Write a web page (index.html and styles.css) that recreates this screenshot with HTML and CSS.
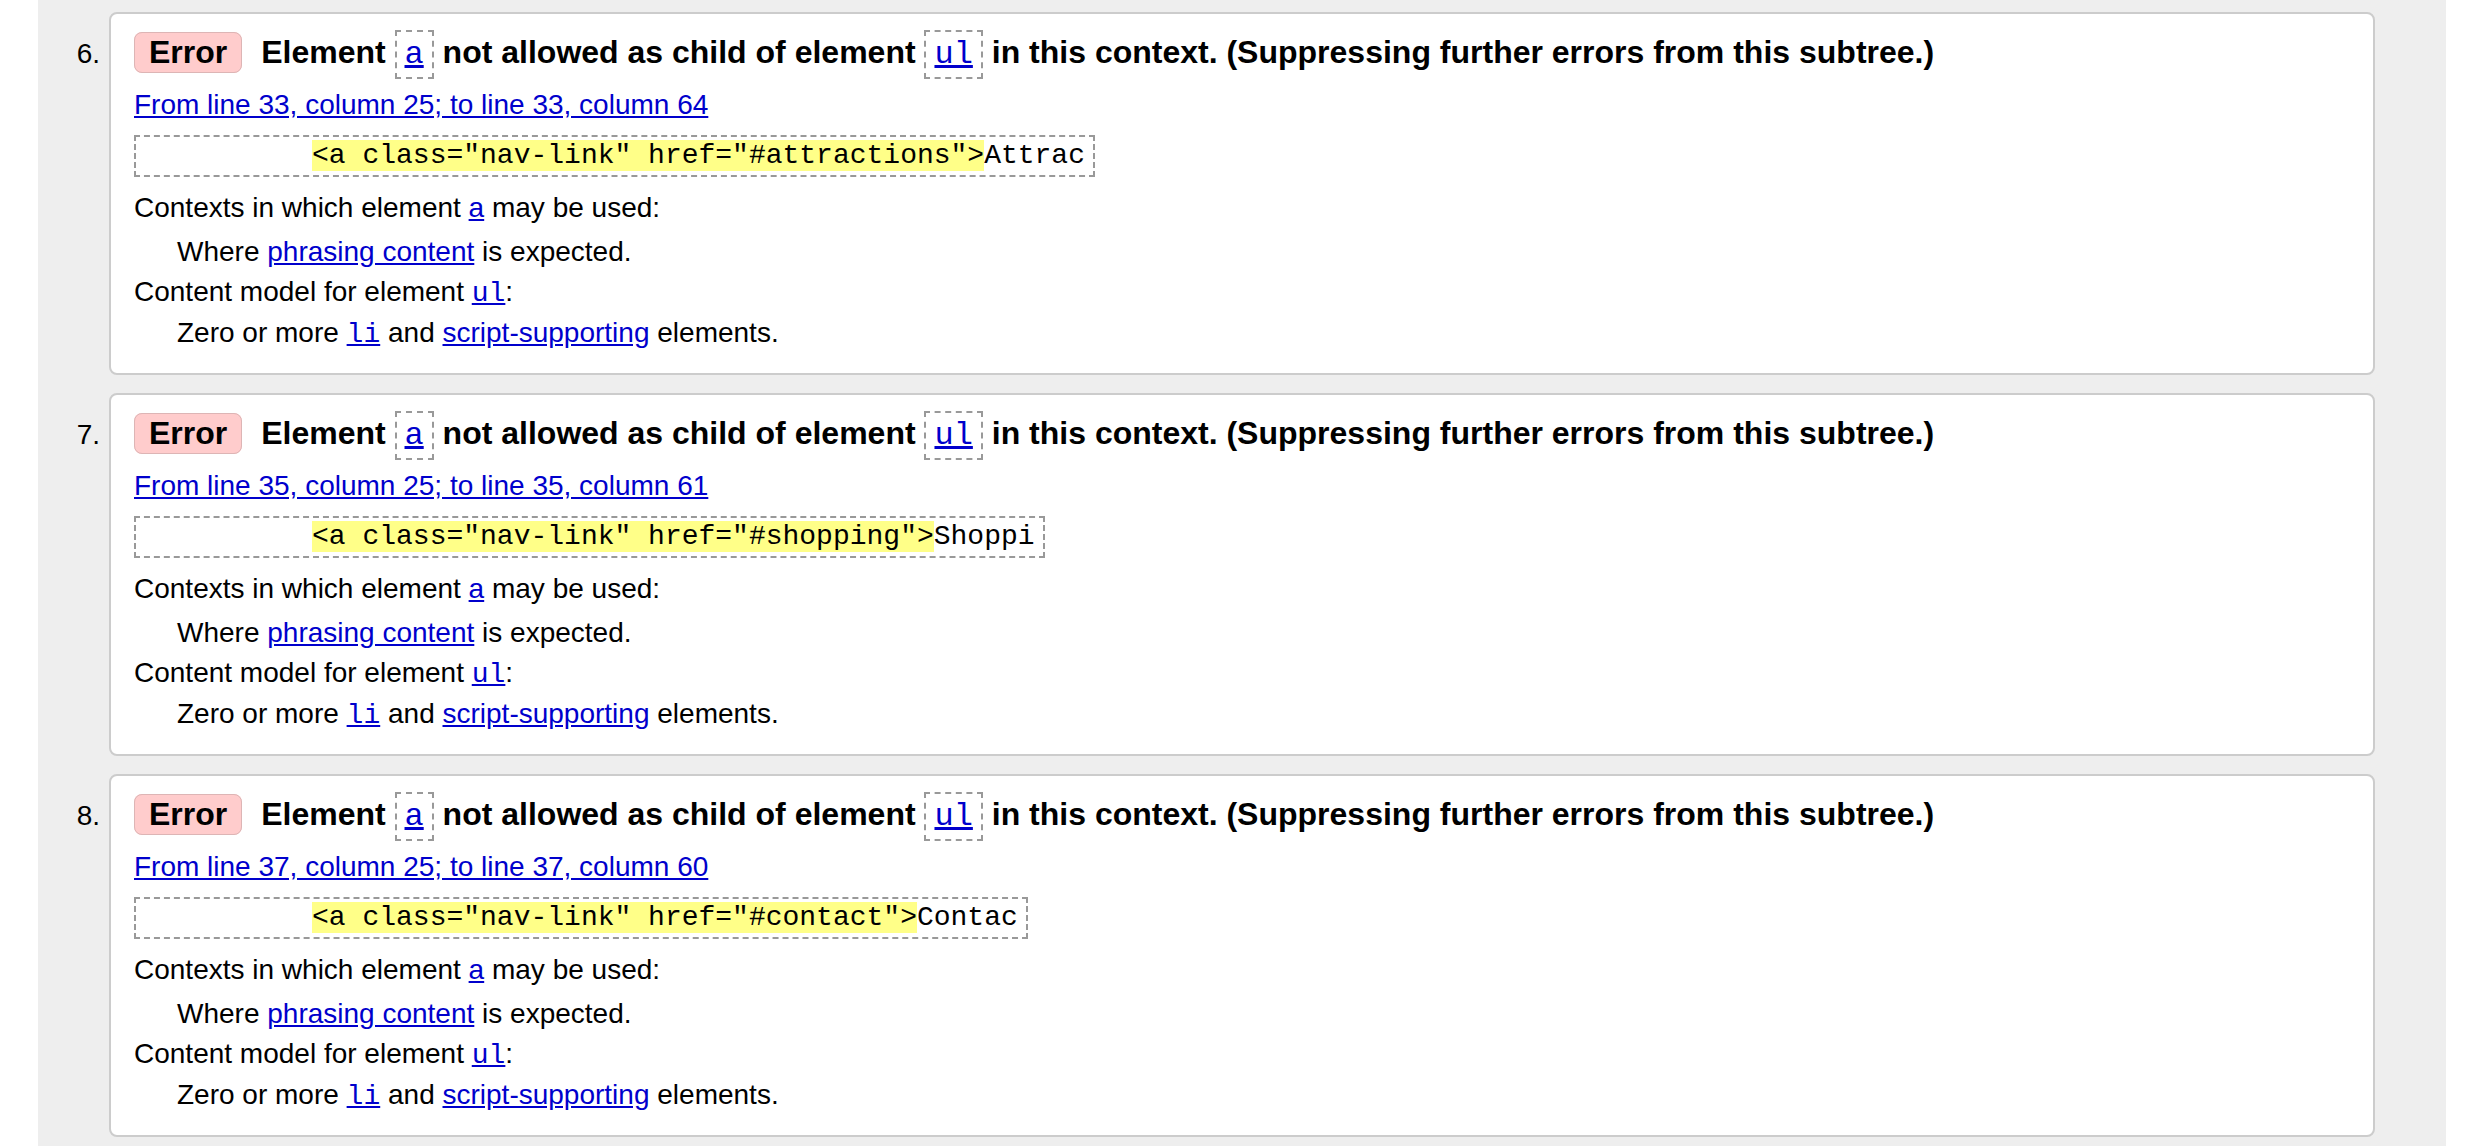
FILE: index.html
```html
<!DOCTYPE html>
<html lang="en">
<head>
<meta charset="utf-8">
<title>Validation messages</title>
<link rel="stylesheet" href="styles.css">
</head>
<body>
<ol class="messages">
  <li class="msg">
    <span class="num">6.</span>
    <div class="card">
      <p class="head"><strong class="badge">Error</strong> <span class="title">Element <code class="tag"><a href="#">a</a></code> not allowed as child of element <code class="tag"><a href="#">ul</a></code> in this context. (Suppressing further errors from this subtree.)</span></p>
      <p class="loc"><a href="#">From line 33, column 25; to line 33, column 64</a></p>
      <p class="extract"><code>          <b>&lt;a class="nav-link" href="#attractions"&gt;</b>Attrac</code></p>
      <dl class="info">
        <dt class="ctx">Contexts in which element <a href="#">a</a> may be used:</dt>
        <dd class="where">Where <a href="#">phrasing content</a> is expected.</dd>
        <dt>Content model for element <code><a href="#">ul</a></code>:</dt>
        <dd class="zero">Zero or more <code><a href="#">li</a></code> and <a href="#">script-supporting</a> elements.</dd>
      </dl>
    </div>
  </li>
  <li class="msg">
    <span class="num">7.</span>
    <div class="card">
      <p class="head"><strong class="badge">Error</strong> <span class="title">Element <code class="tag"><a href="#">a</a></code> not allowed as child of element <code class="tag"><a href="#">ul</a></code> in this context. (Suppressing further errors from this subtree.)</span></p>
      <p class="loc"><a href="#">From line 35, column 25; to line 35, column 61</a></p>
      <p class="extract"><code>          <b>&lt;a class="nav-link" href="#shopping"&gt;</b>Shoppi</code></p>
      <dl class="info">
        <dt class="ctx">Contexts in which element <a href="#">a</a> may be used:</dt>
        <dd class="where">Where <a href="#">phrasing content</a> is expected.</dd>
        <dt>Content model for element <code><a href="#">ul</a></code>:</dt>
        <dd class="zero">Zero or more <code><a href="#">li</a></code> and <a href="#">script-supporting</a> elements.</dd>
      </dl>
    </div>
  </li>
  <li class="msg">
    <span class="num">8.</span>
    <div class="card">
      <p class="head"><strong class="badge">Error</strong> <span class="title">Element <code class="tag"><a href="#">a</a></code> not allowed as child of element <code class="tag"><a href="#">ul</a></code> in this context. (Suppressing further errors from this subtree.)</span></p>
      <p class="loc"><a href="#">From line 37, column 25; to line 37, column 60</a></p>
      <p class="extract"><code>          <b>&lt;a class="nav-link" href="#contact"&gt;</b>Contac</code></p>
      <dl class="info">
        <dt class="ctx">Contexts in which element <a href="#">a</a> may be used:</dt>
        <dd class="where">Where <a href="#">phrasing content</a> is expected.</dd>
        <dt>Content model for element <code><a href="#">ul</a></code>:</dt>
        <dd class="zero">Zero or more <code><a href="#">li</a></code> and <a href="#">script-supporting</a> elements.</dd>
      </dl>
    </div>
  </li>
</ol>
</body>
</html>
```

FILE: styles.css
```css
html, body {
  margin: 0;
  padding: 0;
  background: #fff;
}
body {
  font-family: "Liberation Sans", Arial, Helvetica, sans-serif;
  font-size: 28px;
  color: #000;
}
a {
  color: #0000cc;
  text-decoration: underline;
}
.messages {
  list-style: none;
  margin: 0 38px;
  padding: 12px 71px 40px 0;
  background: #eeeeee;
  display: flex;
  flex-direction: column;
  gap: 18px;
}
.msg {
  display: flex;
  align-items: baseline;
}
.num {
  flex: none;
  width: 62px;
  margin-right: 9px;
  text-align: right;
  line-height: 40px;
}
.card {
  flex: 1;
  min-width: 0;
  background: #fff;
  border: 2px solid #cccccc;
  border-radius: 8px;
  padding: 18px 22px 20px 23px;
}
.head {
  margin: 0;
  font-size: 32px;
  font-weight: bold;
  line-height: 40px;
}
.badge {
  background: #ffcccc;
  border: 1px solid #ddb5b5;
  border-radius: 8px;
  padding: 1px 14px 2px;
  margin-right: 10px;
}
.tag {
  font-family: "Liberation Mono", "Courier New", monospace;
  font-size: 32px;
  font-weight: normal;
  line-height: 1;
  border: 2px dashed #999999;
  padding: 4px 8px;
}
.loc {
  margin: 13px 0 0;
  line-height: 40px;
}
.extract {
  margin: 10px 0 0;
}
.extract code {
  display: block;
  width: fit-content;
  font-family: "Liberation Mono", "Courier New", monospace;
  font-size: 28px;
  line-height: 30px;
  white-space: pre;
  border: 2px dashed #999999;
  padding: 4px 8px;
}
.extract b {
  font-weight: normal;
  background: #ffff88;
}
.info {
  margin: 11px 0 0;
  line-height: 40px;
}
.info dt {
  margin: 0;
}
.info dd {
  margin: 0 0 0 43px;
}
.info .ctx {
  margin-bottom: 4px;
}
.info .zero {
  margin-top: 1px;
}
.info code {
  font-family: "Liberation Mono", "Courier New", monospace;
  font-size: 28px;
  line-height: 1;
}
```
